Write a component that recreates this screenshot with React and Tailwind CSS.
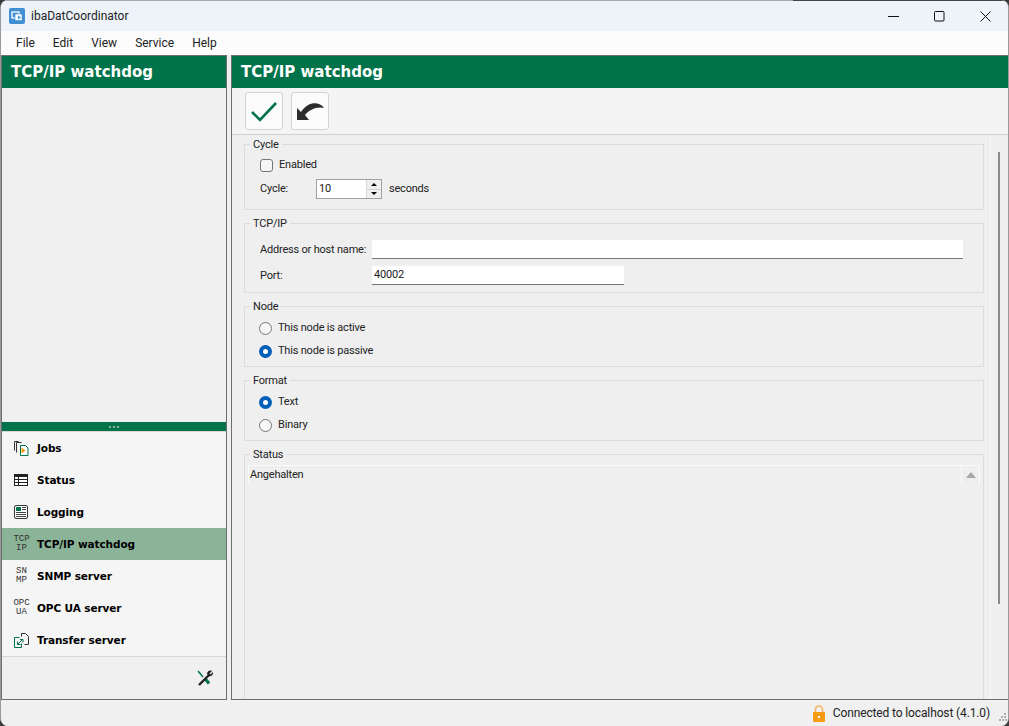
import React from "react";

const FONT = "font-['Roboto','Noto_Sans',sans-serif]";
const BOLD = "font-['DejaVu_Sans',sans-serif] font-bold";
const FORM_TEXT = "text-[11px] tracking-[-0.2px] text-[#222]";

function Check() {
  return (
    <svg width="26" height="24" viewBox="0 0 26 24" fill="none">
      <path d="M1 13 L9 21 L25 4" stroke="#00734a" strokeWidth="2.600" />
    </svg>
  );
}

function Undo() {
  return (
    <svg width="30" height="24" viewBox="0 0 30 24">
      <path d="M2 9 L2 21 L14 21 L10 16 C14 11 22 7 29 9 C25 3 14 1 6 13 Z" fill="#2b2b2b" />
    </svg>
  );
}

function JobsIcon() {
  return (
    <svg width="15" height="15" viewBox="0 0 15 15" fill="none">
      <path d="M.5 9.500V.5h4" stroke="#333" />
      <path d="M2.500 11.500V1.500h5" stroke="#333" fill="none" />
      <path d="M6.500 14.500V4.500h5l2.500 2.500v7.500z" stroke="#00734a" fill="#fff" />
      <path d="M7.500 6.500l4 3-4 3z" fill="#f49a12" />
    </svg>
  );
}

function StatusIcon() {
  return (
    <svg width="14" height="12" viewBox="0 0 14 12" fill="none">
      <rect x=".5" y=".5" width="13" height="11" fill="#fff" stroke="#222" />
      <path d="M0 0h14v3H0z" fill="#222" />
      <path d="M4.500 3v8M1 5.500h12M1 8.500h12" stroke="#222" />
    </svg>
  );
}

function LoggingIcon() {
  return (
    <svg width="14" height="14" viewBox="0 0 14 14" fill="none">
      <rect x=".5" y=".5" width="13" height="13" rx="1.500" fill="#fff" stroke="#333" />
      <rect x="2" y="2" width="5" height="4" fill="#00734a" />
      <path d="M8 2.500h4M8 4.500h4M2 7.500h10M2 9.500h10M2 11.500h10" stroke="#444" />
    </svg>
  );
}

function TransferIcon() {
  return (
    <svg width="15" height="15" viewBox="0 0 15 15" fill="none">
      <path d="M7.500 3.500V.5h4l3 3v8h-4" stroke="#333" />
      <path d="M.5 4.500h5M.5 4.500v10h7v-4" stroke="#00734a" />
      <path d="M4 11l4-4M6 6.500h3v3M3.500 8.500v3h3" stroke="#00734a" />
    </svg>
  );
}

function ToolsIcon() {
  return (
    <svg width="16" height="16" viewBox="0 0 16 16" fill="none">
      <path d="M1 1l5 6" stroke="#00734a" strokeWidth="1.500" />
      <path d="M8 8.500l4 5" stroke="#00734a" strokeWidth="3.200" />
      <path d="M2 15L12 5" stroke="#222" strokeWidth="2.400" />
      <path d="M10 3.500C10.500 1 13 0 15 1l-2.500 2.500 1 1L16 2c.5 2.500-1.500 5-4.500 4z" fill="#222" />
    </svg>
  );
}

function TextIcon({ top, bottom }) {
  return (
    <div className="w-[15px] flex flex-col items-center font-['Liberation_Mono',monospace] text-[9px] leading-[9px] text-[#333]">
      <span>{top}</span>
      <span>{bottom}</span>
    </div>
  );
}

function NavItem({ icon, label, active }) {
  return (
    <div className={"h-8 flex items-center pl-3 " + (active ? "bg-[#8bb397]" : "")}>
      <div className="w-[23px] flex items-center">{icon}</div>
      <span className={"mt-[1px] text-[10.5px] tracking-[-0.1px] text-black " + BOLD}>{label}</span>
    </div>
  );
}

function GroupBox({ title, className, children }) {
  return (
    <fieldset className={"ml-[12px] mr-[6px] border border-[#dcdcdc] min-w-0 " + className}>
      <legend className={"ml-[5px] px-[3px] pt-[1px] leading-[12px] " + FORM_TEXT}>{title}</legend>
      {children}
    </fieldset>
  );
}

function Radio({ checked, label, className }) {
  return (
    <div className={"flex items-center gap-[6px] h-[14px] " + className}>
      {checked ? (
        <div className="w-[13px] h-[13px] rounded-full bg-[#005fb8] flex items-center justify-center">
          <div className="w-[5px] h-[5px] rounded-full bg-white" />
        </div>
      ) : (
        <div className="w-[13px] h-[13px] rounded-full border border-[#767676] bg-[#f6f6f6]" />
      )}
      <span className={"pt-[1px] " + FORM_TEXT}>{label}</span>
    </div>
  );
}

function Field({ className, value }) {
  return (
    <div className={"h-[19px] bg-white border-b border-[#767676] pl-[2px] leading-[18px] " + FORM_TEXT + " " + className}>
      {value}
    </div>
  );
}

export default function App() {
  return (
    <div className={"w-[1009px] h-[726px] overflow-hidden bg-[#3a3a3a] " + FONT}>
      <div className="w-full h-full flex flex-col rounded-lg border-l border-r border-[#9a9a9a] overflow-hidden bg-[#efefef]">
        <div className="h-px shrink-0 flex">
          <div className="w-[792px] bg-[#a8a8a8]" />
          <div className="flex-1 bg-[#444444]" />
        </div>

        {/* title bar */}
        <div className="h-[30px] shrink-0 bg-[#eef3fa] flex items-center">
          <svg className="ml-[8px]" width="16" height="16" viewBox="0 0 16 16">
            <rect width="16" height="16" rx="2" fill="#3f8fd2" />
            <rect x="3" y="4" width="7" height="6" fill="none" stroke="#fff" strokeWidth="1.300" />
            <rect x="6" y="6" width="7" height="6.500" fill="#fff" stroke="#3f8fd2" strokeWidth=".6" />
            <path d="M9 7.500l3 2-3 2z" fill="#3f8fd2" />
          </svg>
          <span className="ml-[6px] text-[12px] text-[#222]">ibaDatCoordinator</span>
          <div className="ml-auto flex items-center pr-[17px] gap-[35px]">
            <svg width="11" height="11" viewBox="0 0 11 11"><path d="M0 5.500h11" stroke="#111" /></svg>
            <svg width="11" height="11" viewBox="0 0 11 11" fill="none"><rect x=".5" y=".5" width="9.500" height="9.500" rx="1" stroke="#111" /></svg>
            <svg width="11" height="11" viewBox="0 0 11 11" fill="none"><path d="M.5.500l10 10M10.500.5l-10 10" stroke="#111" /></svg>
          </div>
        </div>

        {/* menu */}
        <div className="h-6 shrink-0 bg-[#fbfbfb] flex items-center pl-[15px] gap-[18px] text-[12px] text-[#222]">
          <span>File</span>
          <span>Edit</span>
          <span>View</span>
          <span>Service</span>
          <span>Help</span>
        </div>

        {/* main */}
        <div className="flex-1 min-h-0 flex bg-[#efefef]">
          {/* left panel */}
          <div className="w-[226px] flex flex-col border border-[#6e6e6e] bg-[#f0f0f0]">
            <div className={"h-8 shrink-0 bg-[#00734a] text-white text-[15px] flex items-center pl-[9px] " + BOLD}>
              TCP/IP watchdog
            </div>
            <div className="flex-1" />
            <div className="h-[9px] shrink-0 bg-[#00734a] flex items-center justify-center gap-[2px]">
              <div className="w-[2px] h-[2px] bg-[#8bb397]" />
              <div className="w-[2px] h-[2px] bg-[#8bb397]" />
              <div className="w-[2px] h-[2px] bg-[#8bb397]" />
            </div>
            <div className="shrink-0 bg-[#f5f5f5] border-t border-b border-[#d8d8d8]">
              <NavItem icon={<JobsIcon />} label="Jobs" />
              <NavItem icon={<StatusIcon />} label="Status" />
              <NavItem icon={<LoggingIcon />} label="Logging" />
              <NavItem icon={<TextIcon top="TCP" bottom="IP" />} label="TCP/IP watchdog" active />
              <NavItem icon={<TextIcon top="SN" bottom="MP" />} label="SNMP server" />
              <NavItem icon={<TextIcon top="OPC" bottom="UA" />} label="OPC UA server" />
              <NavItem icon={<TransferIcon />} label="Transfer server" />
            </div>
            <div className="h-[42px] shrink-0 flex items-center justify-end pr-[13px]">
              <ToolsIcon />
            </div>
          </div>

          {/* right panel */}
          <div className="ml-[4px] flex-1 min-w-0 flex flex-col border-t border-b border-l border-[#6e6e6e] overflow-hidden">
            <div className={"h-8 shrink-0 bg-[#00734a] text-white text-[15px] flex items-center pl-[9px] " + BOLD}>
              TCP/IP watchdog
            </div>
            <div className="h-[47px] shrink-0 bg-[#f4f4f4] border-b border-[#d0d0d0] flex items-center pl-[13px] gap-2">
              <div className="w-[38px] h-[38px] rounded-[3px] border border-[#d4d4d4] bg-[#fbfbfb] flex items-center justify-center">
                <Check />
              </div>
              <div className="w-[38px] h-[38px] rounded-[3px] border border-[#d4d4d4] bg-[#fbfbfb] flex items-center justify-center">
                <Undo />
              </div>
            </div>

            <div className="flex-1 min-h-0 flex overflow-hidden">
              <div className="w-[759px] shrink-0 pt-[3px] flex flex-col gap-[7px] border-r border-[#fafafa]">
                <GroupBox title="Cycle" className="h-[72px] shrink-0">
                  <div className="pl-[15px]">
                    <div className="flex items-center gap-[6px] h-[14px] mt-[7px]">
                      <div className="w-[13px] h-[13px] rounded-[3px] border border-[#767676] bg-[#f6f6f6]" />
                      <span className={"pt-[1px] " + FORM_TEXT}>Enabled</span>
                    </div>
                    <div className={"flex items-center mt-[7px] " + FORM_TEXT}>
                      <span className="w-[56px]">Cycle:</span>
                      <div className="w-[66px] h-[20px] bg-white border border-[#a0a0a0] flex items-center justify-between pl-[2px]">
                        <span>10</span>
                        <div className="w-[15px] h-full flex flex-col border-l border-[#d8d8d8]">
                          <div className="flex-1 bg-[#f0f0f0] flex items-center justify-center border-b border-[#d0d0d0]">
                            <div className="w-0 h-0 border-x-[3px] border-x-transparent border-b-[3px] border-b-black" />
                          </div>
                          <div className="flex-1 bg-[#f0f0f0] flex items-center justify-center">
                            <div className="w-0 h-0 border-x-[3px] border-x-transparent border-t-[3px] border-t-black" />
                          </div>
                        </div>
                      </div>
                      <span className="ml-[7px]">seconds</span>
                    </div>
                  </div>
                </GroupBox>

                <GroupBox title="TCP/IP" className="h-[76px] shrink-0">
                  <div className={"pl-[15px] " + FORM_TEXT}>
                    <div className="flex items-center mt-[10px]">
                      <span className="w-[112px] pt-[1px] whitespace-nowrap">Address or host name:</span>
                      <Field className="w-[591px]" value="" />
                    </div>
                    <div className="flex items-center mt-[7px]">
                      <span className="w-[112px] pt-[1px]">Port:</span>
                      <Field className="w-[252px]" value="40002" />
                    </div>
                  </div>
                </GroupBox>

                <GroupBox title="Node" className="h-[67px] shrink-0">
                  <Radio label="This node is active" className="ml-[14px] mt-[8px]" />
                  <Radio checked label="This node is passive" className="ml-[14px] mt-[9px]" />
                </GroupBox>

                <GroupBox title="Format" className="h-[67px] shrink-0">
                  <Radio checked label="Text" className="ml-[14px] mt-[8px]" />
                  <Radio label="Binary" className="ml-[14px] mt-[9px]" />
                </GroupBox>

                <GroupBox title="Status" className="h-[270px] shrink-0">
                  <div className="h-full mt-[4px] mx-[3px] border-t border-l border-r border-[#fafafa] flex">
                    <div className={"w-[713px] pl-[1px] pt-[1px] leading-[16px] border-r border-[#fafafa] " + FORM_TEXT}>
                      Angehalten
                    </div>
                    <div className="flex-1 flex justify-center pt-[6px]">
                      <div className="w-0 h-0 border-x-[5px] border-x-transparent border-b-[6px] border-b-[#a6a6a6]" />
                    </div>
                  </div>
                </GroupBox>
              </div>

              {/* scrollbar */}
              <div className="flex-1 pt-[17px] pl-[7px]">
                <div className="w-[2px] h-[452px] bg-[#8a8a8a]" />
              </div>
            </div>
          </div>
        </div>

        {/* status bar */}
        <div className="h-[26px] shrink-0 bg-[#f0f0f0] flex items-center justify-end text-[12px] text-[#222]">
          <svg width="14" height="17" viewBox="0 0 14 17" fill="none" className="mr-[7px]">
            <path d="M3.500 8V4.500a3.500 3.500 0 0 1 7 0V8" stroke="#f5b25a" strokeWidth="1.600" />
            <rect x="1" y="7" width="12" height="10" rx="1" fill="#f59c12" />
            <rect x="6" y="11" width="2" height="2" fill="#fff" />
          </svg>
          <span className="tracking-[-0.13px]">Connected to localhost (4.1.0)</span>
          <svg width="8" height="8" viewBox="0 0 8 8" className="ml-[9px] mr-[1px] mt-[8px]" fill="#b0b0b0">
            <rect x="5" y="0" width="2" height="2" />
            <rect x="2" y="3" width="2" height="2" />
            <rect x="5" y="3" width="2" height="2" />
            <rect x="0" y="6" width="2" height="2" />
            <rect x="3" y="6" width="2" height="2" />
            <rect x="6" y="6" width="2" height="2" />
          </svg>
        </div>
      </div>
    </div>
  );
}
